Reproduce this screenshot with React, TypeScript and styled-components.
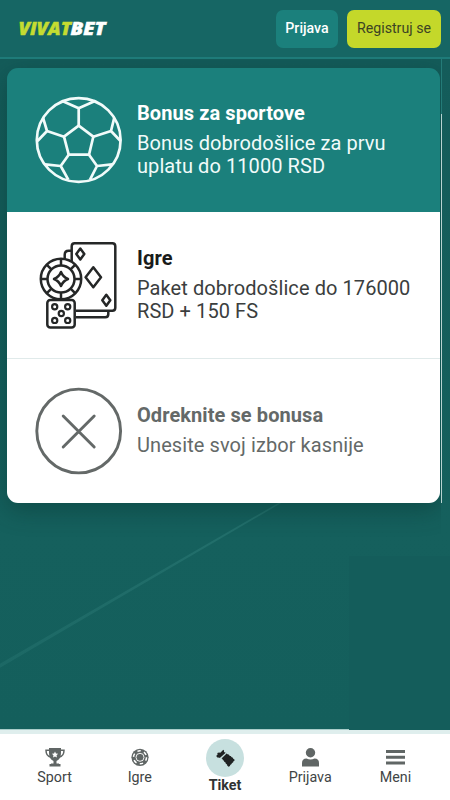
import React from "react";
import styled, { createGlobalStyle } from "styled-components";

const Global = createGlobalStyle`
  * { box-sizing: border-box; }
  body { margin: 0; overflow: hidden; font-family: Roboto, sans-serif; }
  button, a { font-family: inherit; }
`;

const Page = styled.div`
  width: 450px;
  height: 800px;
  display: flex;
  flex-direction: column;
  overflow: hidden;
  background: #145f5c;
`;

const Header = styled.header`
  height: 59px;
  flex: none;
  display: flex;
  align-items: center;
  justify-content: space-between;
  padding: 0 9px 0 16px;
  background: #166664;
  border-bottom: 2px solid #1e7b79;
`;

const Logo = styled.svg`
  display: block;
  width: 96px;
  height: 32px;
`;

const Actions = styled.div`
  display: flex;
  gap: 9px;
`;

const ActionButton = styled.button<{ $accent?: boolean }>`
  width: ${(p) => (p.$accent ? 94 : 62)}px;
  height: 38px;
  padding: 0 0 1px;
  border: 0;
  border-radius: 7px;
  white-space: nowrap;
  font-size: 14.2px;
  font-weight: ${(p) => (p.$accent ? 400 : 500)};
  background: ${(p) => (p.$accent ? "#c4d82a" : "#1b807c")};
  color: ${(p) => (p.$accent ? "#3c4424" : "#fff")};
`;

const Main = styled.main`
  position: relative;
  flex: 1;
  padding: 9px 11px 0 7px;
  overflow: hidden;
  background: linear-gradient(180deg, #145c5a, #15605d 70%, #145f5c);
`;

const Backdrop = styled.svg`
  position: absolute;
  inset: 0;
  width: 450px;
  height: 671px;
`;

const Card = styled.section`
  position: relative;
  width: 432.5px;
  height: 435px;
  display: grid;
  grid-template-rows: 144px 147px 144px;
  border-radius: 11px;
  box-shadow: 0 7px 24px rgba(8, 50, 47, 0.45);
  clip-path: inset(-9px -1.5px -37px -7px);
`;

const Option = styled.article<{ $tone: "active" | "dark" | "muted" }>`
  display: grid;
  grid-template-columns: 86px 1fr;
  column-gap: 16px;
  align-items: center;
  padding: 0 8px 0 28px;
  border-radius: ${(p) => ({ active: "11px 11px 0 0", dark: "0", muted: "0 0 11px 11px" })[p.$tone]};
  background: ${(p) => (p.$tone === "active" ? "#1b807c" : "#fff")};
  color: ${(p) => ({ active: "#f1fbfa", dark: "#3b3e3e", muted: "#646968" })[p.$tone]};
  border-bottom: ${(p) => (p.$tone === "dark" ? "1px solid #e0eaea" : "0")};
`;

const OptionIcon = styled.svg`
  display: block;
  width: 88px;
  height: 88px;
  fill: none;
  stroke: currentColor;
`;

const OptionCopy = styled.div<{ $raised?: boolean }>`
  padding-bottom: ${(p) => (p.$raised ? 2 : 0)}px;
`;

const OptionTitle = styled.h2<{ $color: string }>`
  margin: 0 0 7px;
  font-size: 20px;
  line-height: 23px;
  font-weight: 700;
  letter-spacing: 0.08px;
  color: ${(p) => p.$color};
`;

const OptionText = styled.p`
  margin: 0;
  font-size: 20px;
  letter-spacing: 0.08px;
  line-height: 23px;
  white-space: nowrap;
`;

const Nav = styled.nav`
  height: 70px;
  flex: none;
  display: grid;
  grid-template-columns: repeat(5, 1fr);
  padding: 0 12px;
  border-top: 4px solid #dfeeed;
  background: #fff;
`;

const NavItem = styled.a<{ $active?: boolean }>`
  display: flex;
  flex-direction: column;
  align-items: center;
  padding-top: ${(p) => (p.$active ? 5 : 13)}px;
  font-size: 14.3px;
  line-height: 17px;
  font-weight: ${(p) => (p.$active ? 700 : 400)};
  color: ${(p) => (p.$active ? "#303333" : "#414545")};
`;

const NavIcon = styled.svg`
  display: block;
  width: 20px;
  height: 20px;
  margin-bottom: 2px;
  fill: #606665;
`;

const TicketDisc = styled.span`
  width: 38px;
  height: 38px;
  display: grid;
  place-items: center;
  border-radius: 50%;
  background: #c7e0df;
`;

const TicketIcon = styled.svg`
  display: block;
  width: 20px;
  height: 20px;
  fill: #202323;
`;

const Ball = () => (
  <OptionIcon viewBox="0 0 88 88" strokeWidth="2.7" strokeLinejoin="round">
    <circle cx="43.700" cy="44" r="41.900" />
    <path d="M43.700 29.700 58.300 40.700 54 58.700H33.700L29 40.700Z" />
    <path d="M43.700 29.700V12.300M27.300 5l16.400 7.300L60 5M58.300 40.700 76 35M79.300 21.700 76 35l9.500 10M54 58.700 62 70M55 83.700 62 70l15.300-1.700M33.700 58.700l-8 11.300M10 68.300 25.700 70l7.600 13.700M29 40.700 12 35M8 21.700 12 35l-9.500 10" />
  </OptionIcon>
);

const CHIP_TICKS = [0, 45, 90, 135, 180, 225, 270, 315];
const DICE_DOTS = [[19.7, 65.7], [32.7, 65.7], [26.3, 72.5], [19.7, 79.4], [32.7, 79.4]];

const CasinoIcon = () => (
  <OptionIcon viewBox="0 0 88 88" strokeWidth="2.500" strokeLinejoin="round">
    <g stroke="#252727">
      <path d="M36.700 20V5.300q0-3 3-3h37.600q3 0 3 3v61.400q0 3-3 3H41M36.700 9.700h-3q-4 0-4 4V18M41 76.300h29.300q3 0 3-3v-3" />
      <path d="m45.300 7.500 4 5.500-4 5.500-4-5.500ZM58.300 26.300l7.700 10-7.700 10-7.700-10ZM71.300 53.800l4 5.500-4 5.500-4-5.500Z" />
      <circle cx="26" cy="38" r="20.200" />
      <circle cx="26" cy="38" r="13.500" />
      {CHIP_TICKS.map((angle) => (
        <path key={angle} d="M26 18v6.500" transform={`rotate(${angle} 26 38)`} />
      ))}
      <path d="M26 31q2 5 7 7-5 2-7 7-2-5-7-7 5-2 7-7Z" />
      <rect x="12.300" y="59" width="27.400" height="27.500" rx="3" fill="#fff" />
      {DICE_DOTS.map(([x, y]) => (
        <circle key={`${x}-${y}`} cx={x} cy={y} r="2.600" strokeWidth="2.200" />
      ))}
    </g>
  </OptionIcon>
);

const DeclineIcon = () => (
  <OptionIcon viewBox="0 0 88 88" strokeWidth="2.900" strokeLinecap="round">
    <circle cx="43.700" cy="44" r="41.900" />
    <path d="m28.200 29 31 31m0-31-31 31" />
  </OptionIcon>
);

export default function App() {
  return (
    <Page>
      <Global />
      <Header>
        <Logo viewBox="0 0 96 32">
          <g fontFamily="Open Sans, sans-serif" fontWeight="800" fontStyle="italic" fontSize="17.700" strokeWidth=".5">
            <text x="2.500" y="22" fill="#c4dc31" stroke="#c4dc31" textLength="52.500" lengthAdjust="spacingAndGlyphs">VIVAT</text>
            <text x="54.500" y="22" fill="#fff" stroke="#fff" textLength="35" lengthAdjust="spacingAndGlyphs">BET</text>
          </g>
        </Logo>
        <Actions>
          <ActionButton>Prijava</ActionButton>
          <ActionButton $accent>Registruj se</ActionButton>
        </Actions>
      </Header>
      <Main>
        <Backdrop viewBox="0 0 450 671">
          <defs>
            <linearGradient id="beam">
              <stop stopColor="#297773" stopOpacity=".55" />
              <stop offset="1" stopColor="#297773" />
            </linearGradient>
          </defs>
          <path d="M-2 606 280 443l3 0L-2 610Z" fill="url(#beam)" opacity=".7" />
          <path d="M349 497h101v174H349Z" fill="#145d5b" />
          <path d="M441.500 0v55" stroke="#247b78" />
          <path d="M441.500 55v389" stroke="#b8d3d1" />
          <path d="M0 670.500h349" stroke="#a9cdca" />
        </Backdrop>
        <Card>
          <Option $tone="active">
            <Ball />
            <OptionCopy>
              <OptionTitle $color="#fff">Bonus za sportove</OptionTitle>
              <OptionText>Bonus dobrodošlice za prvu<br />uplatu do 11000 RSD</OptionText>
            </OptionCopy>
          </Option>
          <Option $tone="dark">
            <CasinoIcon />
            <OptionCopy>
              <OptionTitle $color="#191b1b">Igre</OptionTitle>
              <OptionText>Paket dobrodošlice do 176000<br />RSD + 150 FS</OptionText>
            </OptionCopy>
          </Option>
          <Option $tone="muted">
            <DeclineIcon />
            <OptionCopy $raised>
              <OptionTitle $color="#646968">Odreknite se bonusa</OptionTitle>
              <OptionText>Unesite svoj izbor kasnije</OptionText>
            </OptionCopy>
          </Option>
        </Card>
      </Main>
      <Nav>
        <NavItem>
          <NavIcon viewBox="0 0 20 20">
            <path d="M4 1h12v5q0 6-4.500 8v2.500H14V17h1.500v2.500h-11V17H6v-.5h2.500V14Q4 12 4 6Z" />
            <path d="M4.500 3.200H1q0 6 5 7M15.500 3.200H19q0 6-5 7" fill="none" stroke="#606665" strokeWidth="1.500" />
            <path d="m10 4.500.95 2 2.200.3-1.600 1.500.4 2.200-1.950-1.050-1.950 1.050.4-2.200-1.600-1.500 2.200-.3Z" fill="#fff" />
          </NavIcon>
          Sport
        </NavItem>
        <NavItem>
          <NavIcon viewBox="0 0 20 20">
            <circle cx="10" cy="10.300" r="8.600" />
            <circle cx="10" cy="10.300" r="6.500" fill="none" stroke="#fff" strokeWidth="1.500" strokeDasharray="3.400 3.400" />
            <circle cx="10" cy="10.300" r="4" fill="none" stroke="#fff" strokeWidth=".9" />
          </NavIcon>
          Igre
        </NavItem>
        <NavItem $active>
          <TicketDisc>
            <TicketIcon viewBox="0 0 20 20">
              <path d="M8.300 1.700 9 2.600V4l1.700.8-5.900 5.300-.9-.7-1.100.4-1.700-1.900 1.500-1.300-.3-1.700 1.700-.5 1.300.4Z" />
              <path d="M11.600 5.600 13 6.500l.8.100 1 1.300.9.100 1 1.300.9.200.9 1.400.8.300.3 1.300-1.300 1-.1.800-1.400 1-.2.800-1.400 1-.2.800-1.500.9-1.300-1.400-.2-1-1.300-.8-.2-1-1.300-.9-.2-1-1.300-.8-.1-.8-1.100-.7Z" />
            </TicketIcon>
          </TicketDisc>
          Tiket
        </NavItem>
        <NavItem>
          <NavIcon viewBox="0 0 20 20">
            <circle cx="10.500" cy="5.700" r="4.700" />
            <path d="M2 19.500V16q0-4.500 4.500-4.500 4 2 8 0Q19 11.500 19 16v3.500Z" />
          </NavIcon>
          Prijava
        </NavItem>
        <NavItem>
          <NavIcon viewBox="0 0 20 20">
            <path d="M1 3h19v3H1ZM1 8.700h19v3H1ZM1 14.400h19v3H1Z" />
          </NavIcon>
          Meni
        </NavItem>
      </Nav>
    </Page>
  );
}
